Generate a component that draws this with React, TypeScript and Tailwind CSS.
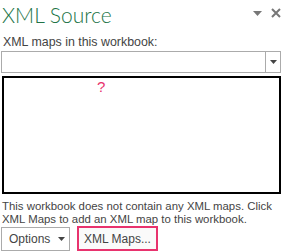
export default function App() {
  return (
    <div className="w-[284px] h-[252px] bg-white overflow-hidden text-[#444] font-['Liberation_Sans',Arial,sans-serif] text-[12px]">
      <div className="flex items-start justify-between pl-[2px] pr-[3px] pt-[2px] h-[34px]">
        <h1 className="text-[#217346] text-[21px] font-light leading-[26px] font-['Lato','Open_Sans',sans-serif]">XML Source</h1>
        <div className="flex items-center gap-[9px] pt-[6px]">
          <svg width="9" height="5" viewBox="0 0 9 5"><path d="M0 0h9L4.5 5z" fill="#777" /></svg>
          <svg width="10" height="10" viewBox="0 0 10 10"><path d="M1 1l8 8M9 1l-8 8" stroke="#777" strokeWidth="2" /></svg>
        </div>
      </div>
      <div className="pl-[1px] pr-[3px]">
        <div className="pl-[2px] leading-[16px] h-[17px] text-[12.4px]">XML maps in this workbook:</div>
        <div className="flex h-[22px] border border-[#ababab] bg-white">
          <div className="flex-1" />
          <div className="w-[15px] border-l border-[#ababab] flex items-center justify-center">
            <svg width="7" height="4" viewBox="0 0 7 4"><path d="M0 0h7L3.5 4z" fill="#444" /></svg>
          </div>
        </div>
        <div className="mt-[3px] ml-[1px] h-[118px] border-2 border-black bg-white relative">
          <span className="absolute left-[93px] top-[0px] text-[#e8336e] text-[15px] leading-[18px]">?</span>
        </div>
        <p className="mt-[6px] pl-[1px] leading-[13px] text-[11.4px] whitespace-nowrap">
          This workbook does not contain any XML maps. Click
          <br />
          XML Maps to add an XML map to this workbook.
        </p>
        <div className="flex gap-[7px] mt-[1px]">
          <button className="h-[24px] w-[69px] border border-[#ababab] bg-white flex items-center gap-[8px] pl-[7px] text-[#444]">
            <span>Options</span>
            <svg width="7" height="4" viewBox="0 0 7 4"><path d="M0 0h7L3.5 4z" fill="#444" /></svg>
          </button>
          <button className="h-[25px] -mt-[1px] w-[81px] border-2 border-[#e8336e] bg-[#fafafa] flex items-center justify-center text-[#444]">
            XML Maps...
          </button>
        </div>
      </div>
    </div>
  );
}
